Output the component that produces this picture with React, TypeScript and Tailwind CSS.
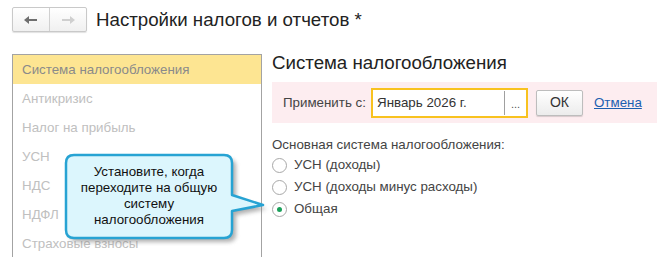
import React from "react";

const items = [
  "Антикризис",
  "Налог на прибыль",
  "УСН",
  "НДС",
  "НДФЛ",
  "Страховые взносы",
];

function Arrow({ dir, color }: { dir: "l" | "r"; color: string }) {
  return (
    <svg width="14" height="10" viewBox="0 0 14 10">
      {dir === "l" ? (
        <path d="M0 5 L5 1 V4 H13 V6 H5 V9 Z" fill={color} />
      ) : (
        <path d="M14 5 L9 1 V4 H1 V6 H9 V9 Z" fill={color} />
      )}
    </svg>
  );
}

function Radio({ checked }: { checked?: boolean }) {
  return (
    <span className="w-[15px] h-[15px] rounded-full border border-[#a8a8a8] bg-white flex items-center justify-center shrink-0">
      {checked && <span className="w-[5px] h-[5px] rounded-full bg-[#1aa05a]" />}
    </span>
  );
}

export default function App() {
  return (
    <div
      className="relative w-[669px] h-[257px] bg-white overflow-hidden text-[#333]"
      style={{ fontFamily: '"Liberation Sans", Arial, sans-serif' }}
    >
      {/* Top bar */}
      <div className="flex pl-[12px] pt-[7px] h-[51px] items-start">
        <div className="flex h-[25px] border border-[#c9c9c9] rounded-[2px] shadow-[0_1px_1px_rgba(0,0,0,0.12)] bg-gradient-to-b from-white to-[#f0f0f0]">
          <div className="w-[37px] flex items-center justify-center border-r border-[#d0d0d0]">
            <Arrow dir="l" color="#6e6e6e" />
          </div>
          <div className="w-[36px] flex items-center justify-center">
            <Arrow dir="r" color="#cfcfcf" />
          </div>
        </div>
        <div className="ml-[9px] text-[18.7px] leading-[25px] text-[#222]">
          Настройки налогов и отчетов *
        </div>
      </div>

      {/* Main */}
      <div className="flex">
        <div className="mt-[3px] ml-[12px] w-[250px] h-[210px] border-l border-t border-r border-[#a3a3a3] text-[13.33px]">
          <div className="h-[29px] bg-[#fde592] flex items-center pl-[9px] text-[#8a8a8a]">
            Система налогообложения
          </div>
          {items.map((t) => (
            <div key={t} className="h-[29px] flex items-center pl-[9px] text-[#c0c0c0]">
              {t}
            </div>
          ))}
        </div>

        <div className="pl-[10px] flex flex-col">
          <div className="text-[18.7px] leading-[24px] text-[#222]">Система налогообложения</div>
          <div className="mt-[7px] w-[385px] h-[41px] bg-[#fdedf0] flex items-center pl-[11px] text-[13.33px]">
            <span className="w-[88px] text-[#444]">Применить с:</span>
            <div className="w-[157px] h-[30px] border-2 border-[#f8c21f] bg-white flex items-stretch">
              <div className="flex-1 flex items-center pl-[4px] text-[#333]">Январь 2026 г.</div>
              <div className="w-[22px] my-[1px] border-l border-[#a0a0a0] flex items-center justify-center text-[11px] text-[#555] leading-none pt-[3px]">
                ...
              </div>
            </div>
            <button className="ml-[8px] w-[47px] h-[26px] border border-[#bdbdbd] rounded-[2px] bg-gradient-to-b from-white to-[#ececec] shadow-[0_1px_1px_rgba(0,0,0,0.15)] text-[14px] text-[#333]">
              ОК
            </button>
            <a className="ml-[11px] text-[#1c5fb0] underline">Отмена</a>
          </div>
          <div className="mt-[14px] text-[13.33px] leading-[16px] text-[#444]">
            Основная система налогообложения:
          </div>
          <div className="mt-[4px] flex flex-col gap-[6px] text-[13.33px] leading-[16px] text-[#444]">
            <label className="flex items-center gap-[7px] h-[16px]">
              <Radio /> УСН (доходы)
            </label>
            <label className="flex items-center gap-[7px] h-[16px]">
              <Radio /> УСН (доходы минус расходы)
            </label>
            <label className="flex items-center gap-[7px] h-[16px]">
              <Radio checked /> Общая
            </label>
          </div>
        </div>
      </div>

      {/* Callout overlay */}
      <svg className="absolute inset-0 pointer-events-none" width="669" height="257">
        <defs>
          <filter id="blur" x="-20%" y="-20%" width="140%" height="140%">
            <feGaussianBlur stdDeviation="2" />
          </filter>
        </defs>
        <path
          d="M74 155 H224 Q232 155 232 163 V195 L263 205 L232 211 V230 Q232 238 224 238 H74 Q66 238 66 230 V163 Q66 155 74 155 Z"
          transform="translate(4 4)"
          fill="#7a7a7a"
          opacity="0.6"
          filter="url(#blur)"
        />
        <path
          d="M74 155 H224 Q232 155 232 163 V195 L263 205 L232 211 V230 Q232 238 224 238 H74 Q66 238 66 230 V163 Q66 155 74 155 Z"
          fill="#dcf6fd"
          stroke="#27a3d3"
          strokeWidth="2.5"
          strokeLinejoin="round"
        />
      </svg>
      <div className="absolute left-[66px] top-[164px] w-[166px] text-center text-[13.33px] leading-[16px] text-[#111]">
        Установите, когда
        <br />
        переходите на общую
        <br />
        систему
        <br />
        налогообложения
      </div>
    </div>
  );
}
